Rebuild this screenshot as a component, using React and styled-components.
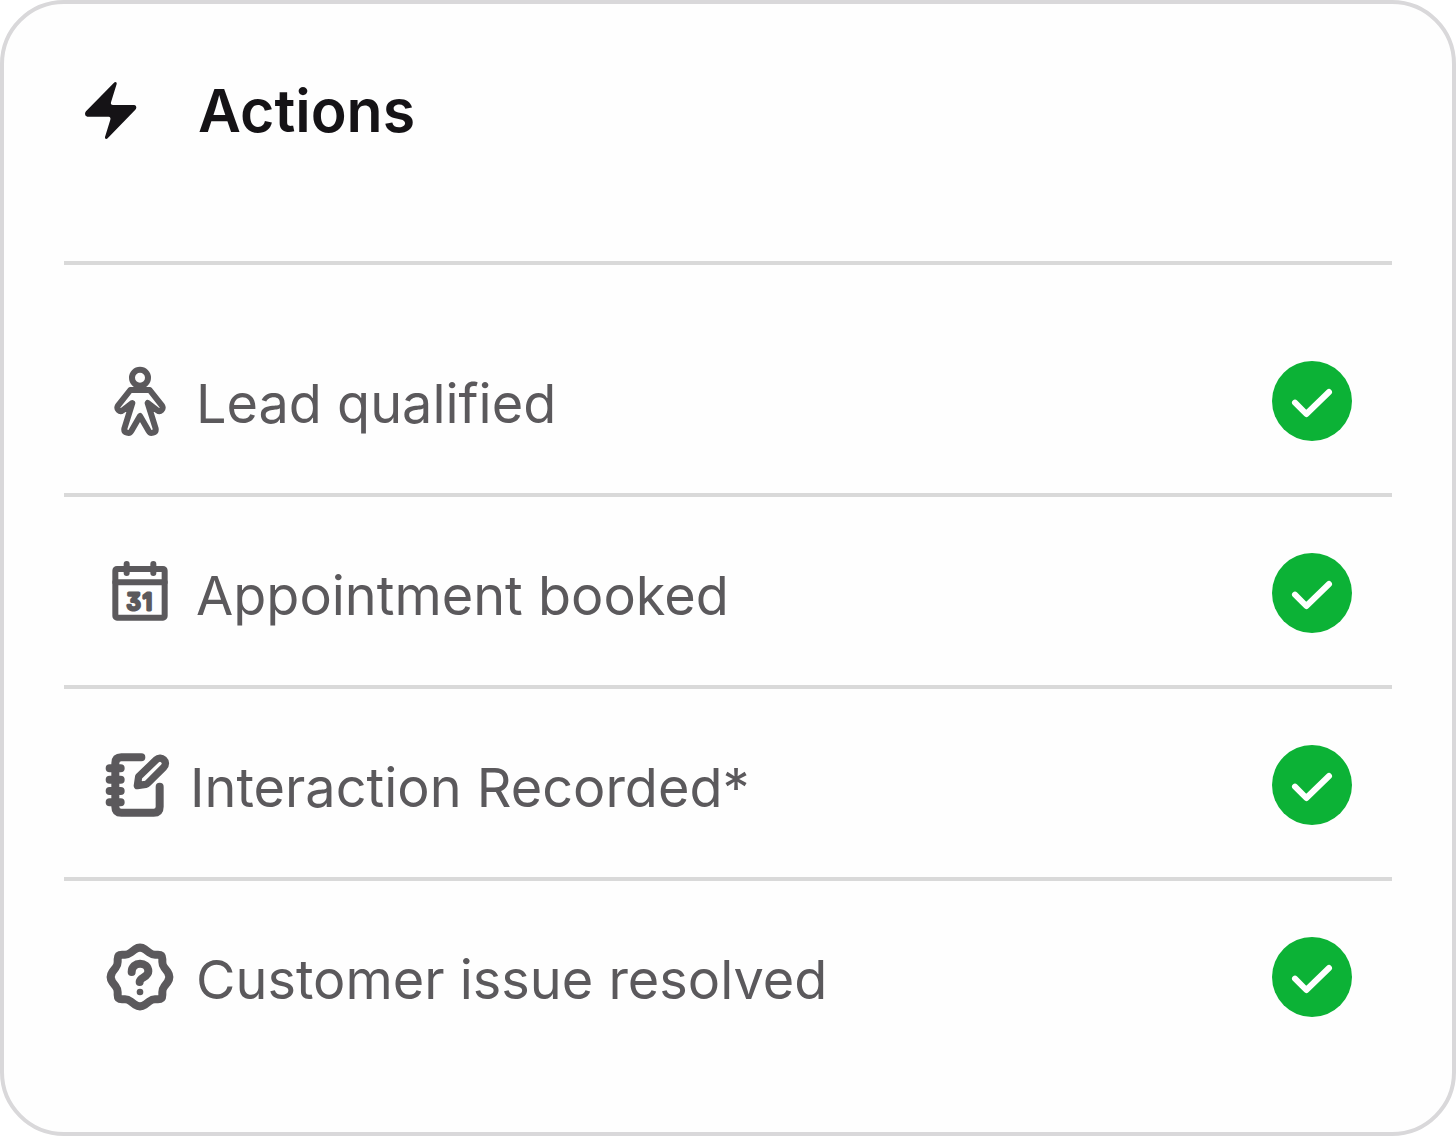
import React from 'react';
import styled, { createGlobalStyle } from 'styled-components';

const GlobalStyle = createGlobalStyle`
  * {
    box-sizing: border-box;
  }
  body {
    margin: 0;
    background: #fff;
    font-family: Inter, 'Liberation Sans', sans-serif;
  }
`;

function BoltIcon() {
  return (
    <Icon viewBox="48 45 216 216" aria-hidden="true">
      <path
        fill="currentColor"
        d="M162 68Q166 64 170 68V72L153 127Q151 135 159 135H223Q229 136 229 142Q229 146 226 149L143 235Q139 239 135 235V231L151 179Q153 171 146 170H82Q75 169 75 162Q75 157 78 154Z"
      />
    </Icon>
  );
}

function PersonIcon() {
  return (
    <Icon viewBox="42 45 216 216" aria-hidden="true">
      <Stroke $width={18}>
        <circle cx="150" cy="83" r="24" />
        <path d="M121 120H179L216 167C222 177 211 188 202 181L173 159L197 236C199 249 181 253 176 243L150 198L124 243C119 253 101 249 103 236L127 159L98 181C89 188 78 177 84 167Z" />
      </Stroke>
    </Icon>
  );
}

function CalendarIcon() {
  return (
    <Icon viewBox="42 45 216 216" aria-hidden="true">
      <Stroke $width={18}>
        <rect x="76" y="81" width="148" height="146" rx="5" />
        <path d="M76 121H224M110 66V93M190 66V93" />
      </Stroke>
      <DayNumber x="131 172" y="203" textAnchor="middle">
        31
      </DayNumber>
    </Icon>
  );
}

function NotebookIcon() {
  return (
    <Icon viewBox="42 45 216 216" aria-hidden="true">
      <Stroke $width={24}>
        <path d="M154 70H94Q76 70 76 88V218Q76 236 94 236H191Q209 236 209 218V158" />
        <path d="M59 103H92M59 137H92M59 171H92M59 205H92" />
      </Stroke>
      <Stroke $width={22}>
        <path d="M146 128L199 77C213 63 237 84 221 100L174 147Q171 150 167 151L142 155Z" />
      </Stroke>
    </Icon>
  );
}

function QuestionBadgeIcon() {
  return (
    <Icon viewBox="42 45 216 216" aria-hidden="true">
      <Stroke $width={24}>
        <path d="M135 70Q150 60 165 70L178 80Q186 86 195 86H204Q217 86 217 99V108Q217 117 223 125L233 138Q243 153 233 168L223 181Q217 189 217 198V207Q217 220 204 220H195Q186 220 178 226L165 236Q150 246 135 236L122 226Q114 220 105 220H96Q83 220 83 207V198Q83 189 77 181L67 168Q57 153 67 138L77 125Q83 117 83 108V99Q83 86 96 86H105Q114 86 122 80Z" />
        <path d="M125 138C125 105 175 105 175 136C175 154 149 154 149 168" />
      </Stroke>
      <circle cx="150" cy="198" r="10" fill="currentColor" />
    </Icon>
  );
}

const actions = [
  { label: 'Lead qualified', icon: PersonIcon },
  { label: 'Appointment booked', icon: CalendarIcon },
  { label: 'Interaction Recorded*', icon: NotebookIcon, tight: true },
  { label: 'Customer issue resolved', icon: QuestionBadgeIcon },
];

function ActionRow({ label, icon: RowIcon, tight }) {
  return (
    <Row>
      <RowLabel $tight={tight}>
        <RowIcon />
        <RowText>{label}</RowText>
      </RowLabel>
      <Check viewBox="30 33 240 240" role="img" aria-label="Done">
        <circle cx="150" cy="153" r="120" fill="#0cb236" />
        <path d="M99 158L133 192L201 126" />
      </Check>
    </Row>
  );
}

function App() {
  return (
    <>
      <GlobalStyle />
      <Card>
        <Header>
          <BoltIcon />
          <Title>Actions</Title>
        </Header>
        <List>
          {actions.map(action => (
            <ActionRow key={action.label} {...action} />
          ))}
        </List>
      </Card>
    </>
  );
}

const Card = styled.section`
  min-height: 100vh;
  padding: 0 60px 60px;
  border: 4px solid #d9d8da;
  border-radius: 64px;
  background: #fefefe;
`;

const Header = styled.header`
  display: flex;
  align-items: center;
  gap: 50px;
  padding: 71px 12px 114px;
  border-bottom: 4px solid #d9d9d9;
  color: #151316;
`;

const Title = styled.h2`
  margin: 0;
  font-size: 59px;
  font-weight: 600;
  line-height: 72px;
`;

const List = styled.ul`
  margin: 0;
  padding: 40px 0 0;
  list-style: none;
`;

const Row = styled.li`
  display: flex;
  align-items: center;
  justify-content: space-between;
  padding: 56px 40px 52px;
  border-bottom: 4px solid #d9d9d9;
  &:last-child {
    border-bottom: 0;
  }
`;

const RowLabel = styled.div`
  display: flex;
  align-items: center;
  gap: ${({ $tight }) => ($tight ? 14 : 20)}px;
  color: #5b595c;
`;

const RowText = styled.span`
  padding-top: 6px;
  font-size: 54px;
  line-height: 72px;
`;

const Icon = styled.svg`
  flex-shrink: 0;
  width: 72px;
  height: 72px;
`;

const Stroke = styled.g`
  fill: none;
  stroke: currentColor;
  stroke-width: ${({ $width }) => $width};
  stroke-linecap: round;
  stroke-linejoin: round;
`;

const DayNumber = styled.text`
  fill: currentColor;
  stroke: currentColor;
  stroke-width: 9;
  stroke-linejoin: round;
  font-size: 68px;
  font-weight: 500;
  font-feature-settings: 'cv09';
`;

const Check = styled.svg`
  flex-shrink: 0;
  width: 80px;
  height: 80px;
  path {
    fill: none;
    stroke: #fff;
    stroke-width: 18;
    stroke-linecap: round;
    stroke-linejoin: round;
  }
`;

export default App;
